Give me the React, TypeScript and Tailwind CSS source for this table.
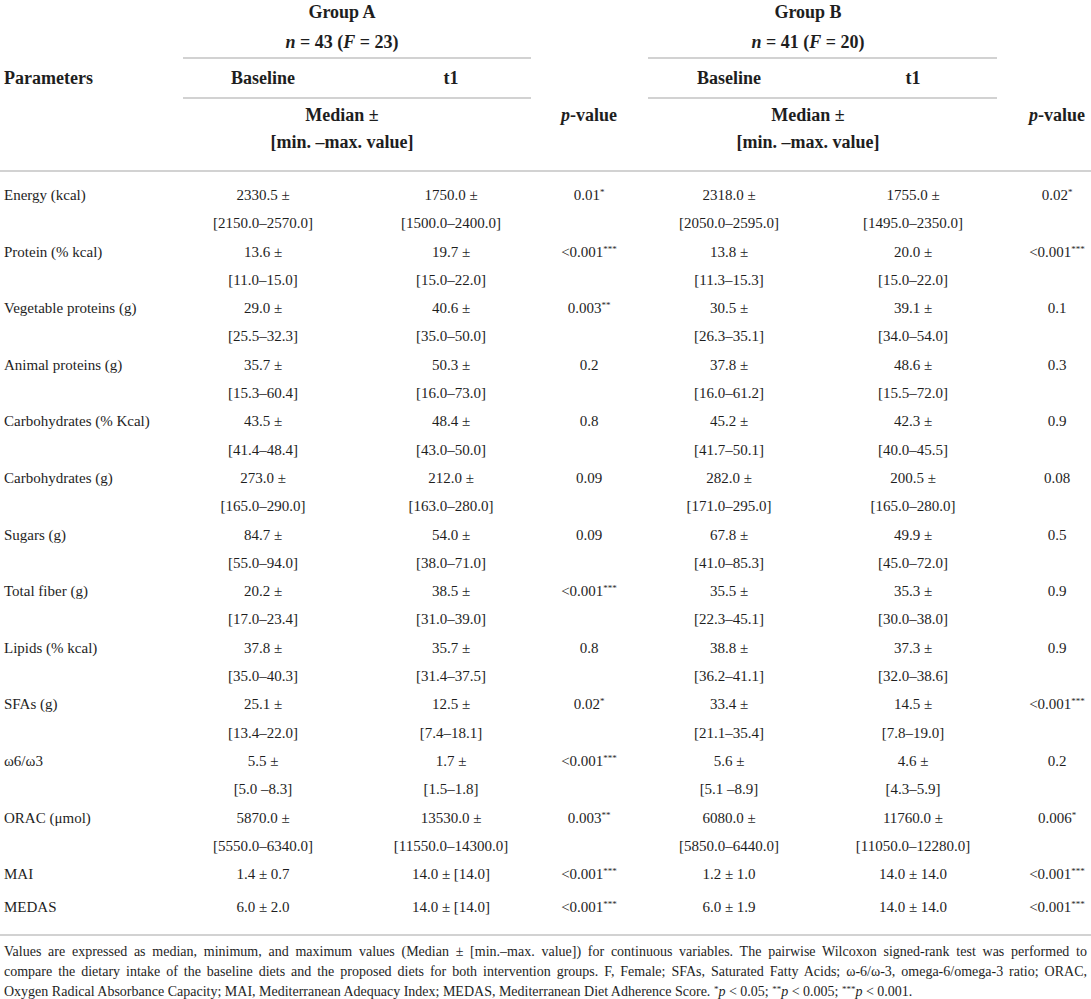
import React from "react";

type Row = {
    name: React.ReactNode;
    a1: [string, string?];
    a2: [string, string?];
    pa: string;
    b1: [string, string?];
    b2: [string, string?];
    pb: string;
};

const rows: Row[] = [
    { name: "Energy (kcal)", a1: ["2330.5 ±", "[2150.0–2570.0]"], a2: ["1750.0 ±", "[1500.0–2400.0]"], pa: "0.01*", b1: ["2318.0 ±", "[2050.0–2595.0]"], b2: ["1755.0 ±", "[1495.0–2350.0]"], pb: "0.02*" },
    { name: "Protein (% kcal)", a1: ["13.6 ±", "[11.0–15.0]"], a2: ["19.7 ±", "[15.0–22.0]"], pa: "<0.001***", b1: ["13.8 ±", "[11.3–15.3]"], b2: ["20.0 ±", "[15.0–22.0]"], pb: "<0.001***" },
    { name: "Vegetable proteins (g)", a1: ["29.0 ±", "[25.5–32.3]"], a2: ["40.6 ±", "[35.0–50.0]"], pa: "0.003**", b1: ["30.5 ±", "[26.3–35.1]"], b2: ["39.1 ±", "[34.0–54.0]"], pb: "0.1" },
    { name: "Animal proteins (g)", a1: ["35.7 ±", "[15.3–60.4]"], a2: ["50.3 ±", "[16.0–73.0]"], pa: "0.2", b1: ["37.8 ±", "[16.0–61.2]"], b2: ["48.6 ±", "[15.5–72.0]"], pb: "0.3" },
    { name: "Carbohydrates (% Kcal)", a1: ["43.5 ±", "[41.4–48.4]"], a2: ["48.4 ±", "[43.0–50.0]"], pa: "0.8", b1: ["45.2 ±", "[41.7–50.1]"], b2: ["42.3 ±", "[40.0–45.5]"], pb: "0.9" },
    { name: "Carbohydrates (g)", a1: ["273.0 ±", "[165.0–290.0]"], a2: ["212.0 ±", "[163.0–280.0]"], pa: "0.09", b1: ["282.0 ±", "[171.0–295.0]"], b2: ["200.5 ±", "[165.0–280.0]"], pb: "0.08" },
    { name: "Sugars (g)", a1: ["84.7 ±", "[55.0–94.0]"], a2: ["54.0 ±", "[38.0–71.0]"], pa: "0.09", b1: ["67.8 ±", "[41.0–85.3]"], b2: ["49.9 ±", "[45.0–72.0]"], pb: "0.5" },
    { name: "Total fiber (g)", a1: ["20.2 ±", "[17.0–23.4]"], a2: ["38.5 ±", "[31.0–39.0]"], pa: "<0.001***", b1: ["35.5 ±", "[22.3–45.1]"], b2: ["35.3 ±", "[30.0–38.0]"], pb: "0.9" },
    { name: "Lipids (% kcal)", a1: ["37.8 ±", "[35.0–40.3]"], a2: ["35.7 ±", "[31.4–37.5]"], pa: "0.8", b1: ["38.8 ±", "[36.2–41.1]"], b2: ["37.3 ±", "[32.0–38.6]"], pb: "0.9" },
    { name: "SFAs (g)", a1: ["25.1 ±", "[13.4–22.0]"], a2: ["12.5 ±", "[7.4–18.1]"], pa: "0.02*", b1: ["33.4 ±", "[21.1–35.4]"], b2: ["14.5 ±", "[7.8–19.0]"], pb: "<0.001***" },
    { name: "ω6/ω3", a1: ["5.5 ±", "[5.0 –8.3]"], a2: ["1.7 ±", "[1.5–1.8]"], pa: "<0.001***", b1: ["5.6 ±", "[5.1 –8.9]"], b2: ["4.6 ±", "[4.3–5.9]"], pb: "0.2" },
    { name: "ORAC (μmol)", a1: ["5870.0 ±", "[5550.0–6340.0]"], a2: ["13530.0 ±", "[11550.0–14300.0]"], pa: "0.003**", b1: ["6080.0 ±", "[5850.0–6440.0]"], b2: ["11760.0 ±", "[11050.0–12280.0]"], pb: "0.006*" },
    { name: "MAI", a1: ["1.4 ± 0.7"], a2: ["14.0 ± [14.0]"], pa: "<0.001***", b1: ["1.2 ± 1.0"], b2: ["14.0 ± 14.0"], pb: "<0.001***" },
    { name: "MEDAS", a1: ["6.0 ± 2.0"], a2: ["14.0 ± [14.0]"], pa: "<0.001***", b1: ["6.0 ± 1.9"], b2: ["14.0 ± 14.0"], pb: "<0.001***" },
];

const grid = "grid grid-cols-[175px_176px_200px_76px_204px_192px_68px]";

function PValue({ v }: { v: string }) {
    const m = v.match(/^(.*?)(\*+)$/);
    if (!m) return <>{v}</>;
    return (
        <>
            {m[1]}
            <span className="relative -top-[5px] text-[9px]">{m[2]}</span>
        </>
    );
}

function Cell({ lines, className }: { lines: [string, string?]; className?: string }) {
    return (
        <div className={"flex flex-col items-center " + (className ?? "")}>
            <span>{lines[0]}</span>
            {lines[1] && <span>{lines[1]}</span>}
        </div>
    );
}

function Rule({ className }: { className?: string }) {
    return <div className={"h-[2px] bg-[#d2d2d2] " + (className ?? "")} />;
}

export default function App() {
    return (
        <div className="w-[1091px] bg-white font-['Liberation_Serif',serif] text-[#1e1e1e]">
            {/* header */}
            <div className="text-[18px] font-bold">
                <div className={grid + " -mt-[3px] leading-[30px]"}>
                    <div />
                    <div className="col-span-2 flex flex-col">
                        <div className="flex flex-col items-center pr-[42px]">
                            <span>Group A</span>
                            <span>
                                <i>n</i> = 43 (<i>F</i> = 23)
                            </span>
                        </div>
                        <Rule className="ml-[8px] mr-[20px]" />
                    </div>
                    <div />
                    <div className="col-span-2 flex flex-col">
                        <div className="flex flex-col items-center pr-[34px]">
                            <span>Group B</span>
                            <span>
                                <i>n</i> = 41 (<i>F</i> = 20)
                            </span>
                        </div>
                        <Rule className="ml-[21px] mr-[26px]" />
                    </div>
                    <div />
                </div>

                <div className={grid + " h-[38px] items-center"}>
                    <div className="pl-1">Parameters</div>
                    <div className="text-center">Baseline</div>
                    <div className="text-center">t1</div>
                    <div />
                    <div className="text-center">Baseline</div>
                    <div className="pr-7 text-center">t1</div>
                    <div />
                </div>

                <div className={grid}>
                    <div />
                    <Rule className="col-span-2 ml-[8px] mr-[20px]" />
                    <div />
                    <Rule className="col-span-2 ml-[21px] mr-[26px]" />
                    <div />
                </div>

                <div className={grid + " pb-[14px] pt-[3px] leading-[27px]"}>
                    <div />
                    <div className="col-span-2 flex flex-col items-center pr-[42px]">
                        <span>Median ±</span>
                        <span>[min. –max. value]</span>
                    </div>
                    <div className="text-center">
                        <i>p</i>-value
                    </div>
                    <div className="col-span-2 flex flex-col items-center pr-[34px]">
                        <span>Median ±</span>
                        <span>[min. –max. value]</span>
                    </div>
                    <div className="text-center">
                        <i>p</i>-value
                    </div>
                </div>
            </div>

            <Rule />

            {/* body */}
            <div className="pb-[10px] pt-[9px] text-[15px] leading-[28.3px]">
                {rows.map((r, i) => (
                    <div key={i} className={grid + (i === rows.length - 1 ? " mt-[3px]" : "")}>
                        <div className="pl-1">{r.name}</div>
                        <Cell lines={r.a1} />
                        <Cell lines={r.a2} />
                        <div className="text-center">
                            <PValue v={r.pa} />
                        </div>
                        <Cell lines={r.b1} />
                        <Cell lines={r.b2} className="pr-7" />
                        <div className="text-center">
                            <PValue v={r.pb} />
                        </div>
                    </div>
                ))}
            </div>

            <Rule />

            {/* footnote */}
            <div className="px-1 pt-[6px] text-[14px] leading-[20px]">
                <div className="text-justify [text-align-last:justify]">
                    Values are expressed as median, minimum, and maximum values (Median ± [min.–max. value]) for continuous variables. The pairwise Wilcoxon signed-rank test was performed to
                </div>
                <div className="text-justify [text-align-last:justify]">
                    compare the dietary intake of the baseline diets and the proposed diets for both intervention groups. F, Female; SFAs, Saturated Fatty Acids; ω-6/ω-3, omega-6/omega-3 ratio; ORAC,
                </div>
                <div>
                    Oxygen Radical Absorbance Capacity; MAI, Mediterranean Adequacy Index; MEDAS, Mediterranean Diet Adherence Score.{" "}
                    <span className="relative -top-[4px] text-[9px]">*</span>
                    <i>p</i> &lt; 0.05; <span className="relative -top-[4px] text-[9px]">**</span>
                    <i>p</i> &lt; 0.005; <span className="relative -top-[4px] text-[9px]">***</span>
                    <i>p</i> &lt; 0.001.
                </div>
            </div>
        </div>
    );
}
